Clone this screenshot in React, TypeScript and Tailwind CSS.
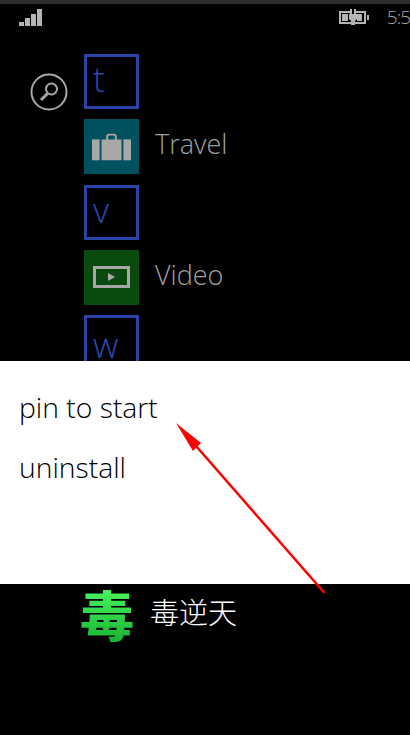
const FONT = '[font-family:"Open_Sans","Noto_Sans_CJK_SC",sans-serif]';

function LetterTile({ letter, low }: { letter: string; low?: boolean }) {
  return (
    <div className={`h-[55px] w-[55px] shrink-0 border-[3px] border-[#2a44a8] pl-[6px] text-[35px] leading-[44px] font-light text-[#2d48b0] ${low ? 'pt-[5px]' : ''}`}>
      {letter}
    </div>
  );
}

function AppRow({ bg, label, children }: { bg: string; label: string; children: React.ReactNode }) {
  return (
    <div className="flex shrink-0 items-center gap-4">
      <div className={`flex h-[55px] w-[55px] items-center justify-center ${bg}`}>{children}</div>
      <span className="pb-[6px] text-[27px] leading-none font-light text-[#a0a0a0]">{label}</span>
    </div>
  );
}

export default function App() {
  return (
    <div className={`relative flex h-[735px] w-[410px] flex-col overflow-hidden bg-black ${FONT}`}>
      <div className="h-1 bg-[#2e2e2e]" />

      {/* Status bar */}
      <div className="flex h-[26px] items-center justify-between pl-[19px]">
        <svg width="28" height="20" viewBox="0 0 28 20" fill="#b4b4b4" className="mt-[2px]">
          <rect x="0" y="14" width="5" height="4" />
          <rect x="6" y="10" width="5" height="8" />
          <rect x="12" y="6" width="5" height="12" />
          <rect x="18" y="1" width="5" height="17" />
        </svg>
        <div className="flex items-center gap-[18px]">
          <svg width="30" height="18" viewBox="0 0 30 18" fill="#b4b4b4">
            <path d="M0 3h11v2H2v9h11v2H0z" />
            <path d="M16 3h11v13H16v-2h9V5h-9z" />
            <rect x="3" y="6" width="6" height="7" />
            <rect x="18" y="6" width="5" height="7" />
            <path d="M10 6h1V1h2v5h2V1h2v5h1v5l-2 2v4h-4v-4l-2-2z" />
            <rect x="28" y="7" width="2" height="5" />
          </svg>
          <span className="text-[19px] leading-none font-light tracking-[-1px] text-[#a8a8a8]">5:5</span>
        </div>
      </div>

      {/* App list */}
      <div className="flex h-[331px] overflow-hidden pt-[24px] pl-[30px]">
        <div className="w-[54px] pt-[19px]">
          <svg width="38" height="38" viewBox="0 0 38 38" fill="none" stroke="#a8a8a8">
            <circle cx="19" cy="19" r="17.5" strokeWidth="2" />
            <circle cx="21.5" cy="16" r="5.5" strokeWidth="2" />
            <path d="M17.5 20.5 11 27" strokeWidth="3" />
          </svg>
        </div>
        <div className="flex flex-col gap-[10.33px]">
          <LetterTile letter="t" />
          <AppRow bg="bg-[#00515f]" label="Travel">
            <svg width="39" height="28" viewBox="0 0 41 28" fill="#a8a8a8">
              <rect x="0" y="6" width="8" height="22" />
              <rect x="33" y="6" width="8" height="22" />
              <path d="M10 6h5V3q0-3 3-3h5q3 0 3 3v3h5v22H10zM17 6h7V3q0-1-1-1h-5q-1 0-1 1z" fillRule="evenodd" />
            </svg>
          </AppRow>
          <LetterTile letter="v" />
          <AppRow bg="bg-[#0a4a0e]" label="Video">
            <svg width="37" height="22" viewBox="0 0 37 22" fill="none">
              <rect x="1.500" y="1.500" width="34" height="19" stroke="#a8a8a8" strokeWidth="3" />
              <path d="M15 7l7 4-7 4z" fill="#a8a8a8" />
            </svg>
          </AppRow>
          <LetterTile letter="w" low />
        </div>
      </div>

      {/* Context menu */}
      <div className="flex h-[223px] flex-col gap-[25px] bg-white pt-[29px] pl-[19px] text-[28.3px] leading-[35px] font-light text-black">
        <span>pin to start</span>
        <span>uninstall</span>
      </div>

      {/* Selected app */}
      <div className="flex items-start pt-[3px] pl-[80px]">
        <span className="w-[70px] bg-gradient-to-b from-[#4af85e] to-[#12b030] bg-clip-text text-[54px] leading-[58px] font-black text-transparent">
          毒
        </span>
        <span className="pt-[11px] text-[29px] leading-none font-light text-white">毒逆天</span>
      </div>

      {/* Red annotation arrow */}
      <svg className="absolute top-0 left-0" width="410" height="735" viewBox="0 0 410 735" fill="none">
        <path d="M324.500 593 196 446" stroke="#ff0000" strokeWidth="2.500" />
        <path d="M176 423 201 443 193 451z" fill="#ff0000" />
      </svg>
    </div>
  );
}
